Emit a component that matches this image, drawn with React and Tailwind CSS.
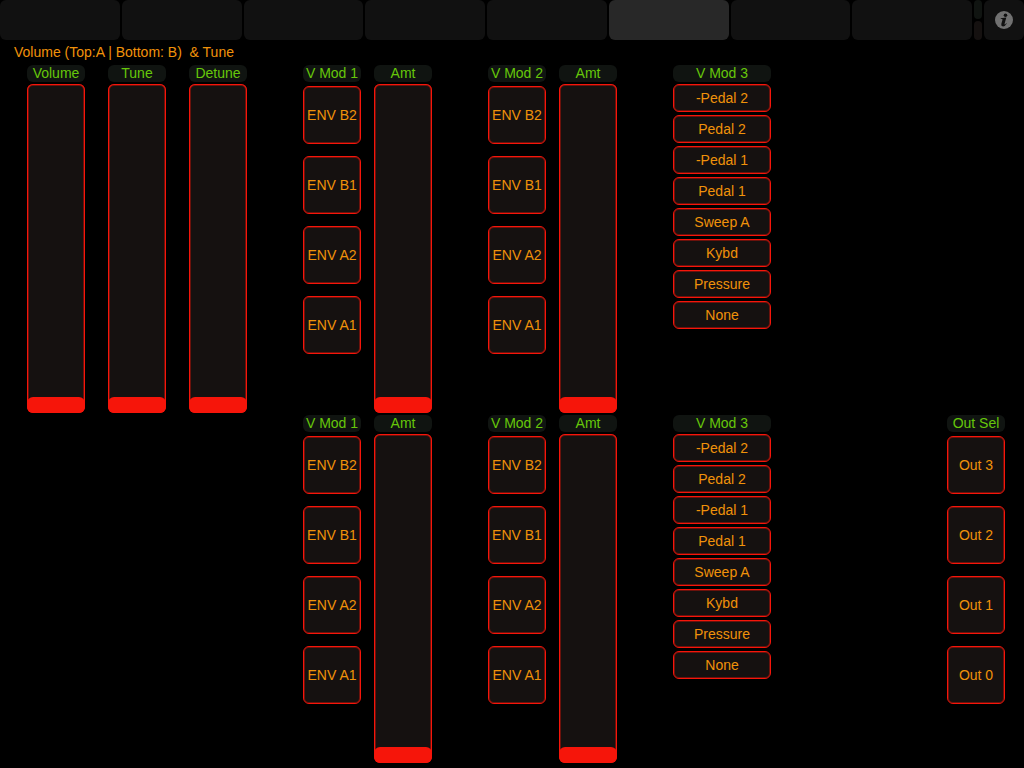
import React, { useState } from 'react';

const TABS = ['Page 1', 'Page 2', 'Page 3', 'Page 4', 'Page 5', 'Volume & Tune', 'Page 7', 'Page 8'];
const ENVELOPES = ['ENV B2', 'ENV B1', 'ENV A2', 'ENV A1'];
const OUTPUTS = ['Out 3', 'Out 2', 'Out 1', 'Out 0'];
const SOURCES = ['-Pedal 2', 'Pedal 2', '-Pedal 1', 'Pedal 1', 'Sweep A', 'Kybd', 'Pressure', 'None'];

const captionClass = 'block h-[17px] rounded-md bg-[#101411] text-center leading-[17px] whitespace-nowrap text-[#66c70a]';

function Fader({ id, label }) {
  const [value, setValue] = useState(0);

  return (
    <div className="flex w-[58px] flex-col gap-[2px]">
      <label htmlFor={id} className={captionClass}>{label}</label>
      <input
        type="range"
        id={id}
        min="0"
        max="127"
        value={value}
        onChange={(e) => setValue(Number(e.target.value))}
        className="m-0 block h-[329px] w-[58px] cursor-pointer appearance-none overflow-hidden rounded-md bg-[#151110] shadow-[inset_0_0_0_1px_#f6150a,inset_0_0_0_2px_#6b120c] [direction:rtl] [writing-mode:vertical-lr] [&::-webkit-slider-thumb]:h-4 [&::-webkit-slider-thumb]:w-[58px] [&::-webkit-slider-thumb]:appearance-none [&::-webkit-slider-thumb]:rounded-md [&::-webkit-slider-thumb]:bg-[#f6150a]"
      />
    </div>
  );
}

function PadButton({ className, children }) {
  return (
    <button
      type="button"
      className={`block w-full cursor-pointer rounded-md border border-[#f6150a] bg-[#151110] text-center whitespace-nowrap text-[#f0920a] shadow-[inset_0_0_0_1px_#6b120c] ${className}`}
    >
      {children}
    </button>
  );
}

// Tall column of square pads
function PadColumn({ id, label, items }) {
  return (
    <div role="group" aria-labelledby={id} className="flex w-[58px] flex-col gap-1">
      <span id={id} className={captionClass}>{label}</span>
      <div className="flex flex-col gap-3">
        {items.map((item) => (
          <PadButton key={item} className="h-[58px]">{item}</PadButton>
        ))}
      </div>
    </div>
  );
}

// Compact list of modulation sources
function SourceList({ id, label }) {
  return (
    <div role="group" aria-labelledby={id} className="flex flex-col gap-[2px]">
      <span id={id} className={captionClass}>{label}</span>
      <div className="flex flex-col gap-[3px]">
        {SOURCES.map((item) => (
          <PadButton key={item} className="h-7">{item}</PadButton>
        ))}
      </div>
    </div>
  );
}

function ModGroup({ id, label, className = '' }) {
  return (
    <div className={`flex justify-between ${className}`}>
      <PadColumn id={`${id}-source`} label={label} items={ENVELOPES} />
      <Fader id={`${id}-amount`} label="Amt" />
    </div>
  );
}

function InfoIcon() {
  return (
    <svg viewBox="0 0 18 18" className="h-[18px] w-[18px]" aria-hidden="true">
      <circle cx="9" cy="9" r="9" fill="#717171" />
      <circle cx="10.5" cy="4.2" r="1.8" fill="#111111" />
      <path
        d="M5.8 7.2 L11.3 6.6 L9.6 12.8 Q9.4 13.8 10 13.4 Q10.6 13 11.1 12.2 L11.8 12.6 Q10.2 15.4 8 15.4 Q5.8 15.2 6.3 13 L7.5 8.7 Q7.6 8.1 6.9 8.1 L5.7 8.1 Z"
        fill="#111111"
      />
    </svg>
  );
}

function TopBar() {
  const [active, setActive] = useState(5);

  return (
    <header className="flex h-10 gap-[2px]">
      <nav className="flex flex-1 gap-[2px]">
        {TABS.map((tab, index) => (
          <button
            key={tab}
            type="button"
            aria-label={tab}
            onClick={() => setActive(index)}
            className={`flex-1 cursor-pointer rounded-md ${index === active ? 'bg-[#282828]' : 'bg-[#111111]'}`}
          />
        ))}
      </nav>
      {/* Connection activity lights */}
      <div className="flex w-2 flex-col gap-[2px]">
        <div className="flex-1 rounded-sm bg-[#101411]" />
        <div className="flex-1 rounded-sm bg-[#151110]" />
      </div>
      <button
        type="button"
        aria-label="Info"
        className="flex w-10 cursor-pointer items-center justify-center rounded-md bg-[#111111]"
      >
        <InfoIcon />
      </button>
    </header>
  );
}

function App() {
  return (
    <div className="min-h-screen bg-black font-['Liberation_Sans',Arial,sans-serif] text-[14px]">
      <TopBar />
      <main className="pt-1">
        <h1 className="mb-[5px] pl-[14px] leading-4 whitespace-pre text-[#f0920a]">
          {'Volume (Top:A | Bottom: B)  & Tune'}
        </h1>
        <div className="grid grid-cols-[220px_129px_129px_98px_1fr] gap-x-14 gap-y-[2px] pr-[19px] pl-[27px]">
          <div className="flex justify-between">
            <Fader id="volume" label="Volume" />
            <Fader id="tune" label="Tune" />
            <Fader id="detune" label="Detune" />
          </div>
          <ModGroup id="a-mod1" label="V Mod 1" />
          <ModGroup id="a-mod2" label="V Mod 2" />
          <SourceList id="a-mod3" label="V Mod 3" />

          <ModGroup id="b-mod1" label="V Mod 1" className="col-start-2" />
          <ModGroup id="b-mod2" label="V Mod 2" />
          <SourceList id="b-mod3" label="V Mod 3" />
          <div className="flex justify-end">
            <PadColumn id="out-sel" label="Out Sel" items={OUTPUTS} />
          </div>
        </div>
      </main>
    </div>
  );
}

export default App;
